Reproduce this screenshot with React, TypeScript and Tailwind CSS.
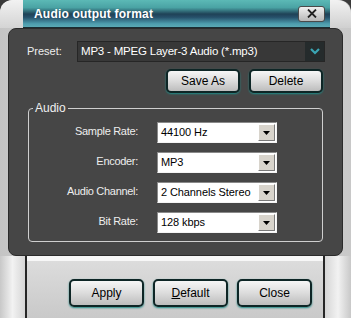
import React from "react";

const fields = [
  { label: "Sample Rate:", value: "44100 Hz" },
  { label: "Encoder:", value: "MP3" },
  { label: "Audio Channel:", value: "2 Channels Stereo" },
  { label: "Bit Rate:", value: "128 kbps" },
];

function SkinButton({ children, w = "w-[74px]", h = "h-[24px]" }: { children: React.ReactNode; w?: string; h?: string }) {
  return (
    <button
      className={`${w} ${h} rounded-[5px] border-2 border-[#0e2626] bg-gradient-to-b from-[#f6f6f6] via-[#dcdcdc] to-[#bdbdbd] text-[12px] text-black shadow-[0_1px_2px_#1f8a86] flex items-center justify-center`}
    >
      {children}
    </button>
  );
}

function Combo({ value }: { value: string }) {
  return (
    <div className="h-[21px] flex items-center bg-white border border-t-[#8a8a8a] border-l-[#8a8a8a] border-b-[#f4f4f4] border-r-[#f4f4f4]">
      <span className="flex-1 pl-[3px] text-[11px] tracking-[-0.1px] text-black leading-none whitespace-nowrap">{value}</span>
      <div className="w-[17px] h-[17px] mr-[1px] bg-[#d8d4cc] border border-t-white border-l-white border-b-[#7a7a7a] border-r-[#7a7a7a] flex items-center justify-center">
        <svg width="7" height="4" viewBox="0 0 7 4">
          <path d="M0 0h7L3.5 4z" fill="#000" />
        </svg>
      </div>
    </div>
  );
}

export default function App() {
  return (
    <div className="w-[351px] h-[318px] bg-[#3a3a3a] font-['Liberation_Sans',Arial,sans-serif]">
      <div className="w-[351px] h-[318px] rounded-t-[12px] overflow-hidden bg-gradient-to-r from-[#c4c4c4] via-[#ececec] to-[#c8c8c8]">
        {/* Title bar */}
        <div className="flex h-[28px]">
          <div className="w-[23px] bg-gradient-to-b from-[#f2f2f2] to-[#d4d4d4] rounded-tl-[12px]" />
          <div className="flex-1 flex items-center justify-between pl-[11px] pr-[5px] border-b border-[#1a2c33] bg-[linear-gradient(to_bottom,#5cb9b6_0%,#4aa3a4_28%,#1f4257_52%,#26506a_64%,#4d9dae_88%,#5ba9b4_100%)]">
            <span className="text-[12px] font-bold tracking-[0.2px] text-white">Audio output format</span>
            <div className="w-[27px] h-[16px] rounded-[3px] border border-[#4a4a4a] bg-gradient-to-b from-[#f0f0f0] to-[#b8b8b8] flex items-center justify-center">
              <svg width="10" height="9" viewBox="0 0 10 9">
                <path d="M1 0.5l8 8M9 0.5l-8 8" stroke="#222" strokeWidth="1.8" />
              </svg>
            </div>
          </div>
          <div className="w-[21px] bg-gradient-to-b from-[#f2f2f2] to-[#d0d0d0] rounded-tr-[14px]" />
        </div>

        {/* Dark body */}
        <div className="flex h-[228px]">
          <div className="w-[8px]" />
          <div className="w-[335px] rounded-[8px] bg-[#464646] border border-[#2b2b2b] pt-[12px] px-[19px]">
            <div className="flex items-center -ml-px -mr-[2px] h-[21px]">
              <span className="w-[50px] text-[11px] text-[#eeeeee]">Preset:</span>
              <div className="flex-1 h-[21px] flex items-center bg-[#383838] border border-[#262626]">
                <span className="flex-1 pl-[3px] text-[11.5px] tracking-[-0.2px] text-white whitespace-nowrap">MP3 - MPEG Layer-3 Audio (*.mp3)</span>
                <div className="w-[19px] h-[19px] bg-[#252b2c] flex items-center justify-center">
                  <svg width="10" height="7" viewBox="0 0 10 7">
                    <path d="M1 1l4 4 4-4" stroke="#3aa6b4" strokeWidth="2.2" fill="none" />
                  </svg>
                </div>
              </div>
            </div>

            <div className="flex justify-end gap-[9px] mt-[7px]">
              <SkinButton>Save As</SkinButton>
              <SkinButton>Delete</SkinButton>
            </div>

            {/* Audio group */}
            <div className="relative mt-[15px] h-[134px] border border-[#cfcfcf] rounded-[4px]">
              <span className="absolute -top-[8px] left-[4px] px-[2px] bg-[#464646] text-[12px] leading-[14px] text-[#f0f0f0]">
                Audio
              </span>
              <div className="grid grid-cols-[109px_120px] gap-x-[19px] gap-y-[9px] pt-[13px]">
                {fields.map((f) => (
                  <React.Fragment key={f.label}>
                    <span className="self-center text-right text-[11px] tracking-[-0.3px] text-[#eeeeee] pb-[2px] whitespace-nowrap">{f.label}</span>
                    <Combo value={f.value} />
                  </React.Fragment>
                ))}
              </div>
            </div>
          </div>
          <div className="w-[8px]" />
        </div>

        {/* Bottom button strip */}
        <div className="flex h-[62px]">
          <div className="w-[27px] border-r-2 border-[#262626] bg-gradient-to-r from-[#c8c8c8] via-[#f2f2f2] to-[#d6d6d6]" />
          <div className="flex-1 flex justify-end items-start gap-[9px] pr-[11px] pt-[18px] border-t-[5px] border-[#f7f7f7] bg-gradient-to-b from-[#dcdcdc] to-[#c9c9c9]">
            <SkinButton w="w-[75px]" h="h-[28px]">Apply</SkinButton>
            <SkinButton w="w-[75px]" h="h-[28px]">
              <span>
                <span className="underline">D</span>efault
              </span>
            </SkinButton>
            <SkinButton w="w-[75px]" h="h-[28px]">Close</SkinButton>
          </div>
          <div className="w-[28px] border-l-2 border-[#262626] bg-gradient-to-r from-[#d6d6d6] via-[#f2f2f2] to-[#c8c8c8]" />
        </div>
      </div>
    </div>
  );
}
